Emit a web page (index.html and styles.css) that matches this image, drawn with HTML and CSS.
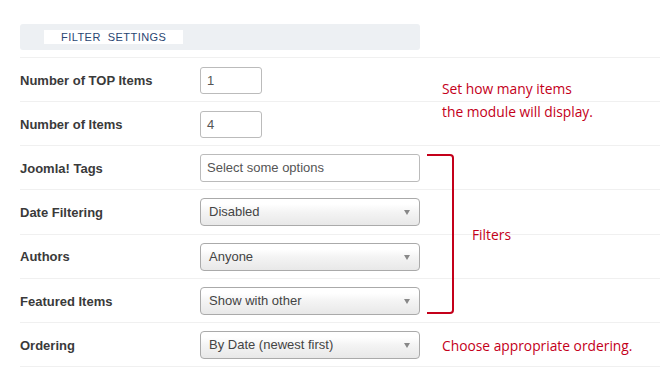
FILE: index.html
```html
<!DOCTYPE html>
<html lang="en">
<head>
    <meta charset="UTF-8">
    <title>Filter Settings</title>
    <link rel="stylesheet" href="styles.css">
</head>
<body>
    <div class="page">
        <div class="section-head">
            <span class="section-title">FILTER&nbsp; SETTINGS</span>
        </div>
        <div class="rows">
            <div class="row">
                <label>Number of TOP Items</label>
                <div class="input short">1</div>
            </div>
            <div class="row">
                <label>Number of Items</label>
                <div class="input short">4</div>
            </div>
            <div class="row">
                <label>Joomla! Tags</label>
                <div class="input wide">Select some options</div>
            </div>
            <div class="row">
                <label>Date Filtering</label>
                <div class="select">Disabled</div>
            </div>
            <div class="row">
                <label>Authors</label>
                <div class="select">Anyone</div>
            </div>
            <div class="row">
                <label>Featured Items</label>
                <div class="select">Show with other</div>
            </div>
            <div class="row">
                <label>Ordering</label>
                <div class="select">By Date (newest first)</div>
            </div>
        </div>

        <!-- notes drawn over the form -->
        <div class="note note-items">Set how many items<br>the module will display.</div>
        <div class="bracket"></div>
        <div class="note note-filters">Filters</div>
        <div class="note note-order">Choose appropriate ordering.</div>
    </div>
</body>
</html>
```
FILE: styles.css
```css
* {
    margin: 0;
    padding: 0;
    box-sizing: border-box;
}
body {
    font-family: 'Liberation Sans', Arial, sans-serif;
    background-color: #ffffff;
    color: #333;
}
.page {
    position: relative;
    width: 660px;
    height: 383px;
    padding: 24px 0 0 20px;
}
.section-head {
    width: 400px;
    height: 26px;
    background-color: #edf0f3;
    border-radius: 3px;
    padding: 6px 0 0 24px;
}
.section-title {
    display: block;
    width: 139px;
    height: 14px;
    background-color: #ffffff;
    color: #2a4672;
    font-size: 11px;
    line-height: 14px;
    padding-left: 17px;
    letter-spacing: 0.45px;
}
.rows {
    margin-top: 7px;
    border-bottom: 1px solid #f0f0f0;
}
.row {
    display: flex;
    align-items: center;
    height: 44px;
    padding-top: 1px;
    border-top: 1px solid #f0f0f0;
}
.row:nth-child(4), .row:nth-child(5) {
    height: 44.5px;
}
.row label {
    width: 180px;
    font-weight: bold;
    font-size: 13px;
    color: #3a3a3a;
}
.input {
    height: 28px;
    border: 1px solid #bbb;
    border-radius: 3px;
    font-size: 13px;
    line-height: 26px;
    color: #555;
    padding-left: 6px;
}
.input.short {
    width: 62px;
    height: 27px;
}
.input.wide {
    width: 220px;
}
.select {
    position: relative;
    width: 220px;
    height: 28px;
    border: 1px solid #aaa;
    border-radius: 4px;
    background: linear-gradient(#ffffff 20%, #f4f4f4 50%, #e8e8e8 100%);
    font-size: 13px;
    line-height: 26px;
    color: #444;
    padding-left: 8px;
}
.select::after {
    content: '';
    position: absolute;
    right: 9px;
    top: 11px;
    border-left: 3px solid transparent;
    border-right: 3px solid transparent;
    border-top: 5px solid #888;
}
.note {
    position: absolute;
    font-family: 'Open Sans', sans-serif;
    font-size: 13.8px;
    color: #c4001a;
    line-height: 23px;
}
.note-items {
    left: 442px;
    top: 77px;
}
.note-filters {
    left: 472px;
    top: 223px;
}
.note-order {
    left: 442px;
    top: 334px;
}
.bracket {
    position: absolute;
    left: 427px;
    top: 154px;
    width: 27px;
    height: 160px;
    border: 2px solid #c4001a;
    border-left: none;
    border-radius: 0 4px 4px 0;
}
```
